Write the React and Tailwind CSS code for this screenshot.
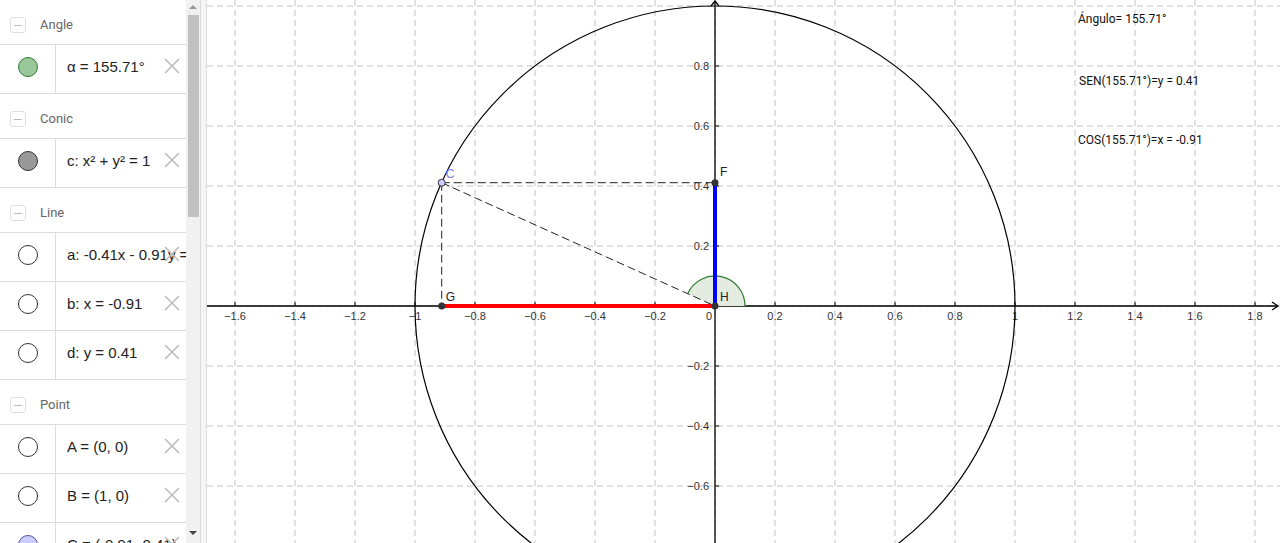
const groups = [
  {
    title: 'Angle',
    items: [{ dot: 'bg-[#99c799] border-[#2e7d32]', text: 'α = 155.71°' }]
  },
  {
    title: 'Conic',
    items: [{ dot: 'bg-[#999999] border-[#333333]', text: 'c: x² + y² = 1' }]
  },
  {
    title: 'Line',
    items: [
      { dot: 'bg-white border-[#333333]', text: 'a: -0.41x - 0.91y = 0' },
      { dot: 'bg-white border-[#333333]', text: 'b: x = -0.91' },
      { dot: 'bg-white border-[#333333]', text: 'd: y = 0.41' }
    ]
  },
  {
    title: 'Point',
    items: [
      { dot: 'bg-white border-[#333333]', text: 'A = (0, 0)' },
      { dot: 'bg-white border-[#333333]', text: 'B = (1, 0)' },
      { dot: 'bg-[#ccccff] border-[#5050a0]', text: 'C = (-0.91, 0.41)' }
    ]
  }
]

function DeleteIcon() {
  return (
    <svg className="absolute right-[6px] top-[13px]" width="16" height="16" viewBox="0 0 16 16">
      <path d="M1 1 L15 15 M15 1 L1 15" stroke="#bdbdbd" strokeWidth="1.6" fill="none" />
    </svg>
  )
}

function AlgebraRow({ dot, text }) {
  return (
    <div className="flex h-[49px] shrink-0 border-b border-[#dddddd] bg-white">
      <div className="flex w-[56px] shrink-0 items-center justify-center border-r border-[#dddddd] pb-[4px]">
        <span className={`block h-5 w-5 rounded-full border ${dot}`} />
      </div>
      <div className="relative flex flex-1 items-center overflow-hidden pb-[4px] pl-[11px]">
        <span className="whitespace-nowrap font-['Liberation_Sans',sans-serif] text-[15px] text-[#222]">{text}</span>
        <DeleteIcon />
      </div>
    </div>
  )
}

function GroupHeader({ title }) {
  return (
    <div className="flex h-[45px] shrink-0 items-center border-b border-[#dddddd] bg-white pl-[10px] pt-[6px]">
      <span className="flex h-4 w-4 items-center justify-center rounded-[3px] border border-[#e0e0e0]">
        <span className="block h-px w-2 bg-[#bbbbbb]" />
      </span>
      <span className="ml-[14px] font-['Roboto',sans-serif] text-[13px] text-[#666]">{title}</span>
    </div>
  )
}

function AlgebraView() {
  return (
    <div className="flex h-[543px] w-[207px] shrink-0">
      <div className="flex w-[186px] flex-col overflow-hidden">
        {groups.map((g) => (
          <div key={g.title} className="flex flex-col">
            <GroupHeader title={g.title} />
            {g.items.map((it) => (
              <AlgebraRow key={it.text} {...it} />
            ))}
          </div>
        ))}
      </div>
      <div className="relative flex w-[14px] flex-col items-center bg-[#f1f1f1]">
        <span className="mt-[5px] h-0 w-0 border-x-[4px] border-b-[4px] border-x-transparent border-b-[#999]" />
        <div className="mt-[6px] h-[202px] w-[11px] bg-[#c1c1c1]" />
        <div className="flex-1" />
        <span className="mb-[8px] h-0 w-0 border-x-[4px] border-t-[4px] border-x-transparent border-t-[#444]" />
      </div>
      <div className="w-[7px] border-x border-[#dcdcdc] bg-[#f5f5f5]" />
    </div>
  )
}

const OX = 715
const OY = 306
const U = 300

function fmt(v) {
  const s = Math.abs(v).toFixed(1).replace(/\.0$/, '')
  return v < 0 ? '\u2212' + s : s
}

function Graphics() {
  const vx = []
  for (let k = -8; k <= 9; k++) vx.push(k)
  const hy = []
  for (let k = -5; k <= 3; k++) hy.push(k)

  const cx = OX - 0.911 * U
  const cy = OY - 0.411 * U
  const ang = (155.71 * Math.PI) / 180
  const r = 30
  const ax = OX + r * Math.cos(ang)
  const ay = OY - r * Math.sin(ang)

  return (
    <svg className="block h-[543px] flex-1" viewBox="207 0 1073 543" width="1073" height="543">
      <rect x="207" y="0" width="1073" height="543" fill="#ffffff" />
      {vx.map((k) => (
        <line key={'v' + k} x1={OX + 60 * k} y1="0" x2={OX + 60 * k} y2="543" stroke="#c4c4c4" strokeWidth="1" strokeDasharray="6 4" />
      ))}
      {[-6, ...hy].map((k) => (
        <line key={'h' + k} x1="207" y1={OY + 60 * k} x2="1280" y2={OY + 60 * k} stroke="#c4c4c4" strokeWidth="1" strokeDasharray="6 4" />
      ))}

      {/* axes */}
      <line x1="207" y1={OY} x2="1278" y2={OY} stroke="#000" strokeWidth="1.3" />
      <polyline points={`1272,${OY - 4} 1278,${OY} 1272,${OY + 4}`} fill="none" stroke="#000" strokeWidth="1.3" />
      <line x1={OX} y1="1" x2={OX} y2="543" stroke="#000" strokeWidth="1.3" />
      <polyline points={`${OX - 4},6 ${OX},1 ${OX + 4},6`} fill="none" stroke="#000" strokeWidth="1.3" />

      {vx.filter((k) => k !== 0).map((k) => (
        <line key={'tx' + k} x1={OX + 60 * k} y1={OY - 4} x2={OX + 60 * k} y2={OY} stroke="#000" strokeWidth="1" />
      ))}
      {hy.filter((k) => k !== 0 && k !== -5).map((k) => (
        <line key={'ty' + k} x1={OX} y1={OY + 60 * k} x2={OX + 4} y2={OY + 60 * k} stroke="#000" strokeWidth="1" />
      ))}

      <g fontFamily="Liberation Sans, sans-serif" fontSize="11" fill="#333">
        {vx.filter((k) => k !== 0).map((k) => (
          <text key={'lx' + k} x={OX + 60 * k} y={OY + 14} textAnchor="middle">
            {fmt(k * 0.2)}
          </text>
        ))}
        <text x={OX - 6} y={OY + 14} textAnchor="middle">0</text>
        {hy.filter((k) => k !== 0 && k !== -5).map((k) => (
          <text key={'ly' + k} x={OX - 6} y={OY + 60 * k + 4} textAnchor="end">
            {fmt(-k * 0.2)}
          </text>
        ))}
      </g>

      <circle cx={OX} cy={OY} r={U} fill="none" stroke="#000" strokeWidth="1.2" />

      <path
        d={`M ${OX} ${OY} L ${OX + r} ${OY} A ${r} ${r} 0 0 0 ${ax} ${ay} Z`}
        fill="#e4ece2"
        stroke="none"
      />
      <path d={`M ${OX + r} ${OY} A ${r} ${r} 0 0 0 ${ax} ${ay}`} fill="none" stroke="#2e7d32" strokeWidth="1.2" />

      <g stroke="#222" strokeWidth="1" strokeDasharray="8 4" fill="none">
        <line x1={cx} y1={cy} x2={OX} y2={cy} />
        <line x1={cx} y1={cy} x2={cx} y2={OY} />
        <line x1={cx} y1={cy} x2={OX} y2={OY} />
      </g>

      <line x1={cx} y1={OY} x2={OX} y2={OY} stroke="#ff0000" strokeWidth="4" />
      <line x1={OX} y1={OY} x2={OX} y2={cy} stroke="#0000ff" strokeWidth="4" />

      <circle cx={cx} cy={OY} r="3.5" fill="#333" />
      <circle cx={OX} cy={OY} r="3.5" fill="#333" />
      <circle cx={OX} cy={cy} r="3.5" fill="#333" />
      <circle cx={cx} cy={cy} r="3.5" fill="#ccccff" stroke="#333" strokeWidth="1" />

      <g fontFamily="Liberation Sans, sans-serif" fontSize="12">
        <text x={cx + 4} y={cy - 5} fill="#8080ff">C</text>
        <text x={OX + 5} y={cy - 7} fill="#222">F</text>
        <text x={cx + 4} y={OY - 5} fill="#222">G</text>
        <text x={OX + 5} y={OY - 5} fill="#222">H</text>
      </g>

      <g fontFamily="Roboto, sans-serif" fontSize="12" fill="#111">
        <text x="1078" y="23">Ángulo= 155.71°</text>
        <text x="1079" y="85">SEN(155.71°)=y = 0.41</text>
        <text x="1078" y="144">COS(155.71°)=x = -0.91</text>
      </g>
    </svg>
  )
}

export default function App() {
  return (
    <div className="flex h-[543px] w-[1280px] overflow-hidden bg-white">
      <AlgebraView />
      <Graphics />
    </div>
  )
}
